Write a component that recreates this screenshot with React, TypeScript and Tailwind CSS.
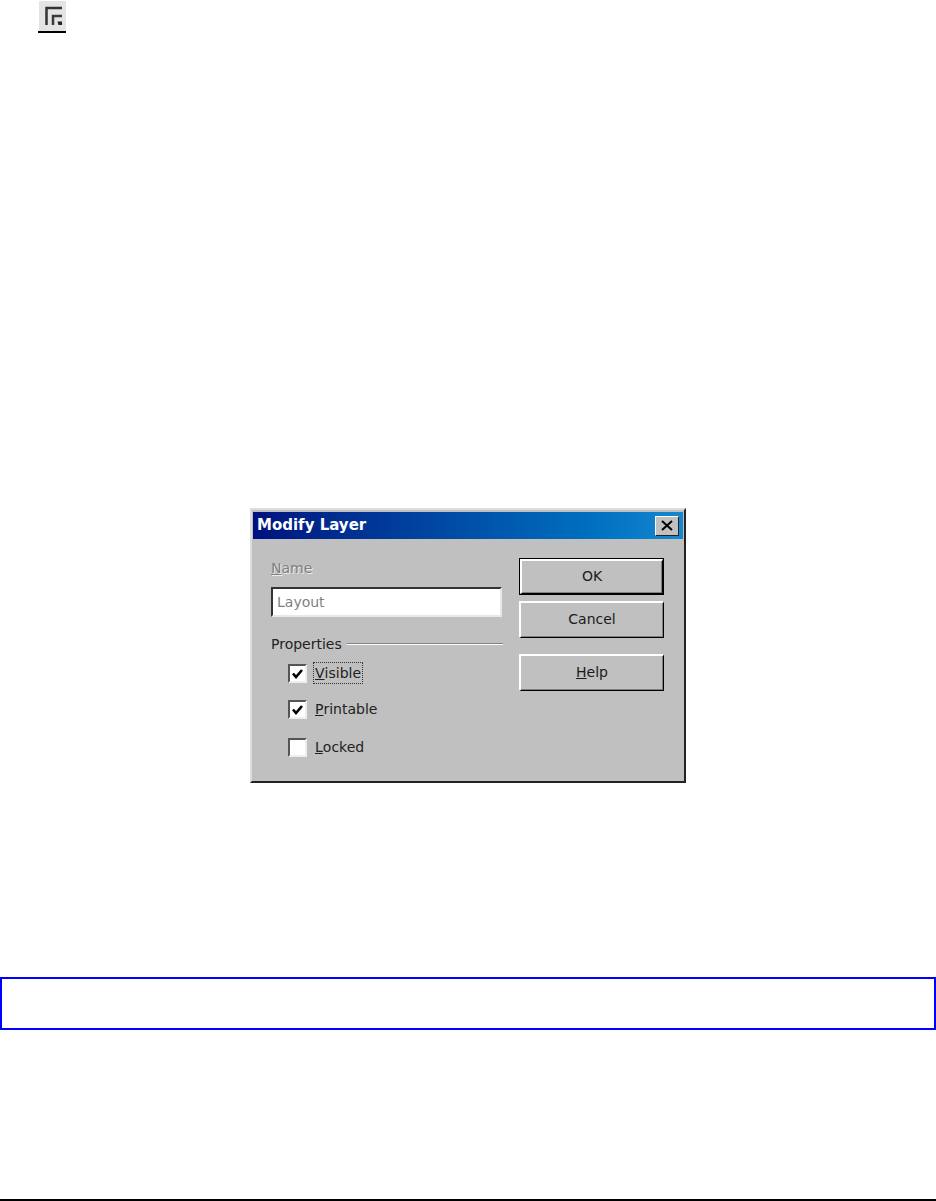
const uiFont = "font-['DejaVu_Sans',sans-serif]";

function LayerIcon() {
  return (
    <div className="ml-[38px] mt-[1px] w-[28px]">
      <div className="ml-[1px] h-[30px] w-[27px] bg-[#e4e4e4]">
        <svg width="27" height="30" viewBox="0 0 27 30" fill="none">
          <path d="M7.5 24V7H23" stroke="#333" strokeWidth="2.5" />
          <path d="M14 24V15H23" stroke="#3a3a3a" strokeWidth="2.5" />
          <path d="M18.5 20.5H23V24H19.5Z" fill="#222" />
        </svg>
      </div>
      <div className="h-[2px] w-full bg-black" />
    </div>
  );
}

function DialogButton({ label, hotkey, isDefault }: { label: string; hotkey?: string; isDefault?: boolean }) {
  const rest = hotkey ? label.slice(hotkey.length) : label;
  return (
    <div className={`w-[145px] h-[37px] ${isDefault ? 'border border-black' : ''}`}>
      <div className="flex h-full w-full items-center justify-center border-t-2 border-l-2 border-t-white border-l-white border-r border-b border-r-black border-b-black bg-[#c0c0c0] pb-[2px] text-[14px] text-[#1a1a1a] shadow-[inset_-1px_-1px_0_#808080]">
        {hotkey && <span className="underline">{hotkey}</span>}
        {rest}
      </div>
    </div>
  );
}

function CheckRow({ label, checked, focused }: { label: string; checked?: boolean; focused?: boolean }) {
  return (
    <div className="flex h-[20px] items-center">
      <div className="flex h-[19px] w-[19px] items-center justify-center border-t-2 border-l-2 border-t-[#555] border-l-[#555] border-r-2 border-b-2 border-r-[#eee] border-b-[#eee] bg-white">
        {checked && (
          <svg width="13" height="13" viewBox="0 0 13 13" fill="none">
            <path d="M2 6.5L5 10L11 3" stroke="#000" strokeWidth="2.6" />
          </svg>
        )}
      </div>
      <div className={`ml-[7px] flex h-[20px] items-center px-[1px] text-[14px] text-[#222] ${focused ? 'outline-1 outline-dotted outline-[#333]' : ''}`}>
        <span className="underline">{label[0]}</span>
        {label.slice(1)}
      </div>
    </div>
  );
}

function ModifyLayerDialog() {
  return (
    <div className={`mx-auto mt-[475px] h-[275px] w-[436px] border-2 border-t-[#ddd] border-l-[#ddd] border-r-[#222] border-b-[#222] bg-[#c0c0c0] px-[1px] py-[2px] ${uiFont}`}>
      <div className="flex h-[27px] items-center justify-between bg-gradient-to-r from-[#00107f] to-[#1587d0] pl-[4px] pr-[4px]">
        <span className="text-[15px] font-bold text-white">Modify Layer</span>
        <div className="flex h-[20px] w-[24px] items-center justify-center border border-t-white border-l-white border-r-[#222] border-b-[#222] bg-[#c0c0c0]">
          <svg width="12" height="11" viewBox="0 0 12 11">
            <path d="M1 1L11 10M11 1L1 10" stroke="#000" strokeWidth="2" />
          </svg>
        </div>
      </div>
      <div className="flex justify-between pl-[18px] pr-[19px]">
        <div className="w-[232px] pt-[21px]">
          <div className="text-[14px] leading-[17px] text-[#808080] [text-shadow:1px_1px_0_#eee]">
            <span className="underline">N</span>ame
          </div>
          <div className="mt-[10px] flex h-[30px] w-[231px] items-center border-t-2 border-l-2 border-t-[#333] border-l-[#333] border-r-2 border-b-2 border-r-[#e8e8e8] border-b-[#e8e8e8] bg-white pl-[4px] text-[14px] text-[#808080]">
            Layout
          </div>
          <div className="mt-[18px] flex items-center">
            <span className="text-[14px] leading-[18px] text-[#222]">Properties</span>
            <div className="ml-[5px] h-[2px] flex-1 border-t border-t-[#808080] border-b border-b-white" />
          </div>
          <div className="ml-[17px] mt-[10px] flex flex-col">
            <CheckRow label="Visible" checked focused />
            <div className="mt-[16px]">
              <CheckRow label="Printable" checked />
            </div>
            <div className="mt-[18px]">
              <CheckRow label="Locked" />
            </div>
          </div>
        </div>
        <div className="flex flex-col pt-[19px]">
          <DialogButton label="OK" isDefault />
          <div className="mt-[6px]">
            <DialogButton label="Cancel" />
          </div>
          <div className="mt-[16px]">
            <DialogButton label="Help" hotkey="H" />
          </div>
        </div>
      </div>
    </div>
  );
}

export default function App() {
  return (
    <div className="flex h-[1201px] w-[936px] flex-col overflow-hidden bg-white">
      <LayerIcon />
      <ModifyLayerDialog />
      <div className="mt-[194px] h-[53px] w-full border-2 border-[#0000ff]" />
      <div className="mt-auto h-[2px] w-full bg-black" />
    </div>
  );
}
